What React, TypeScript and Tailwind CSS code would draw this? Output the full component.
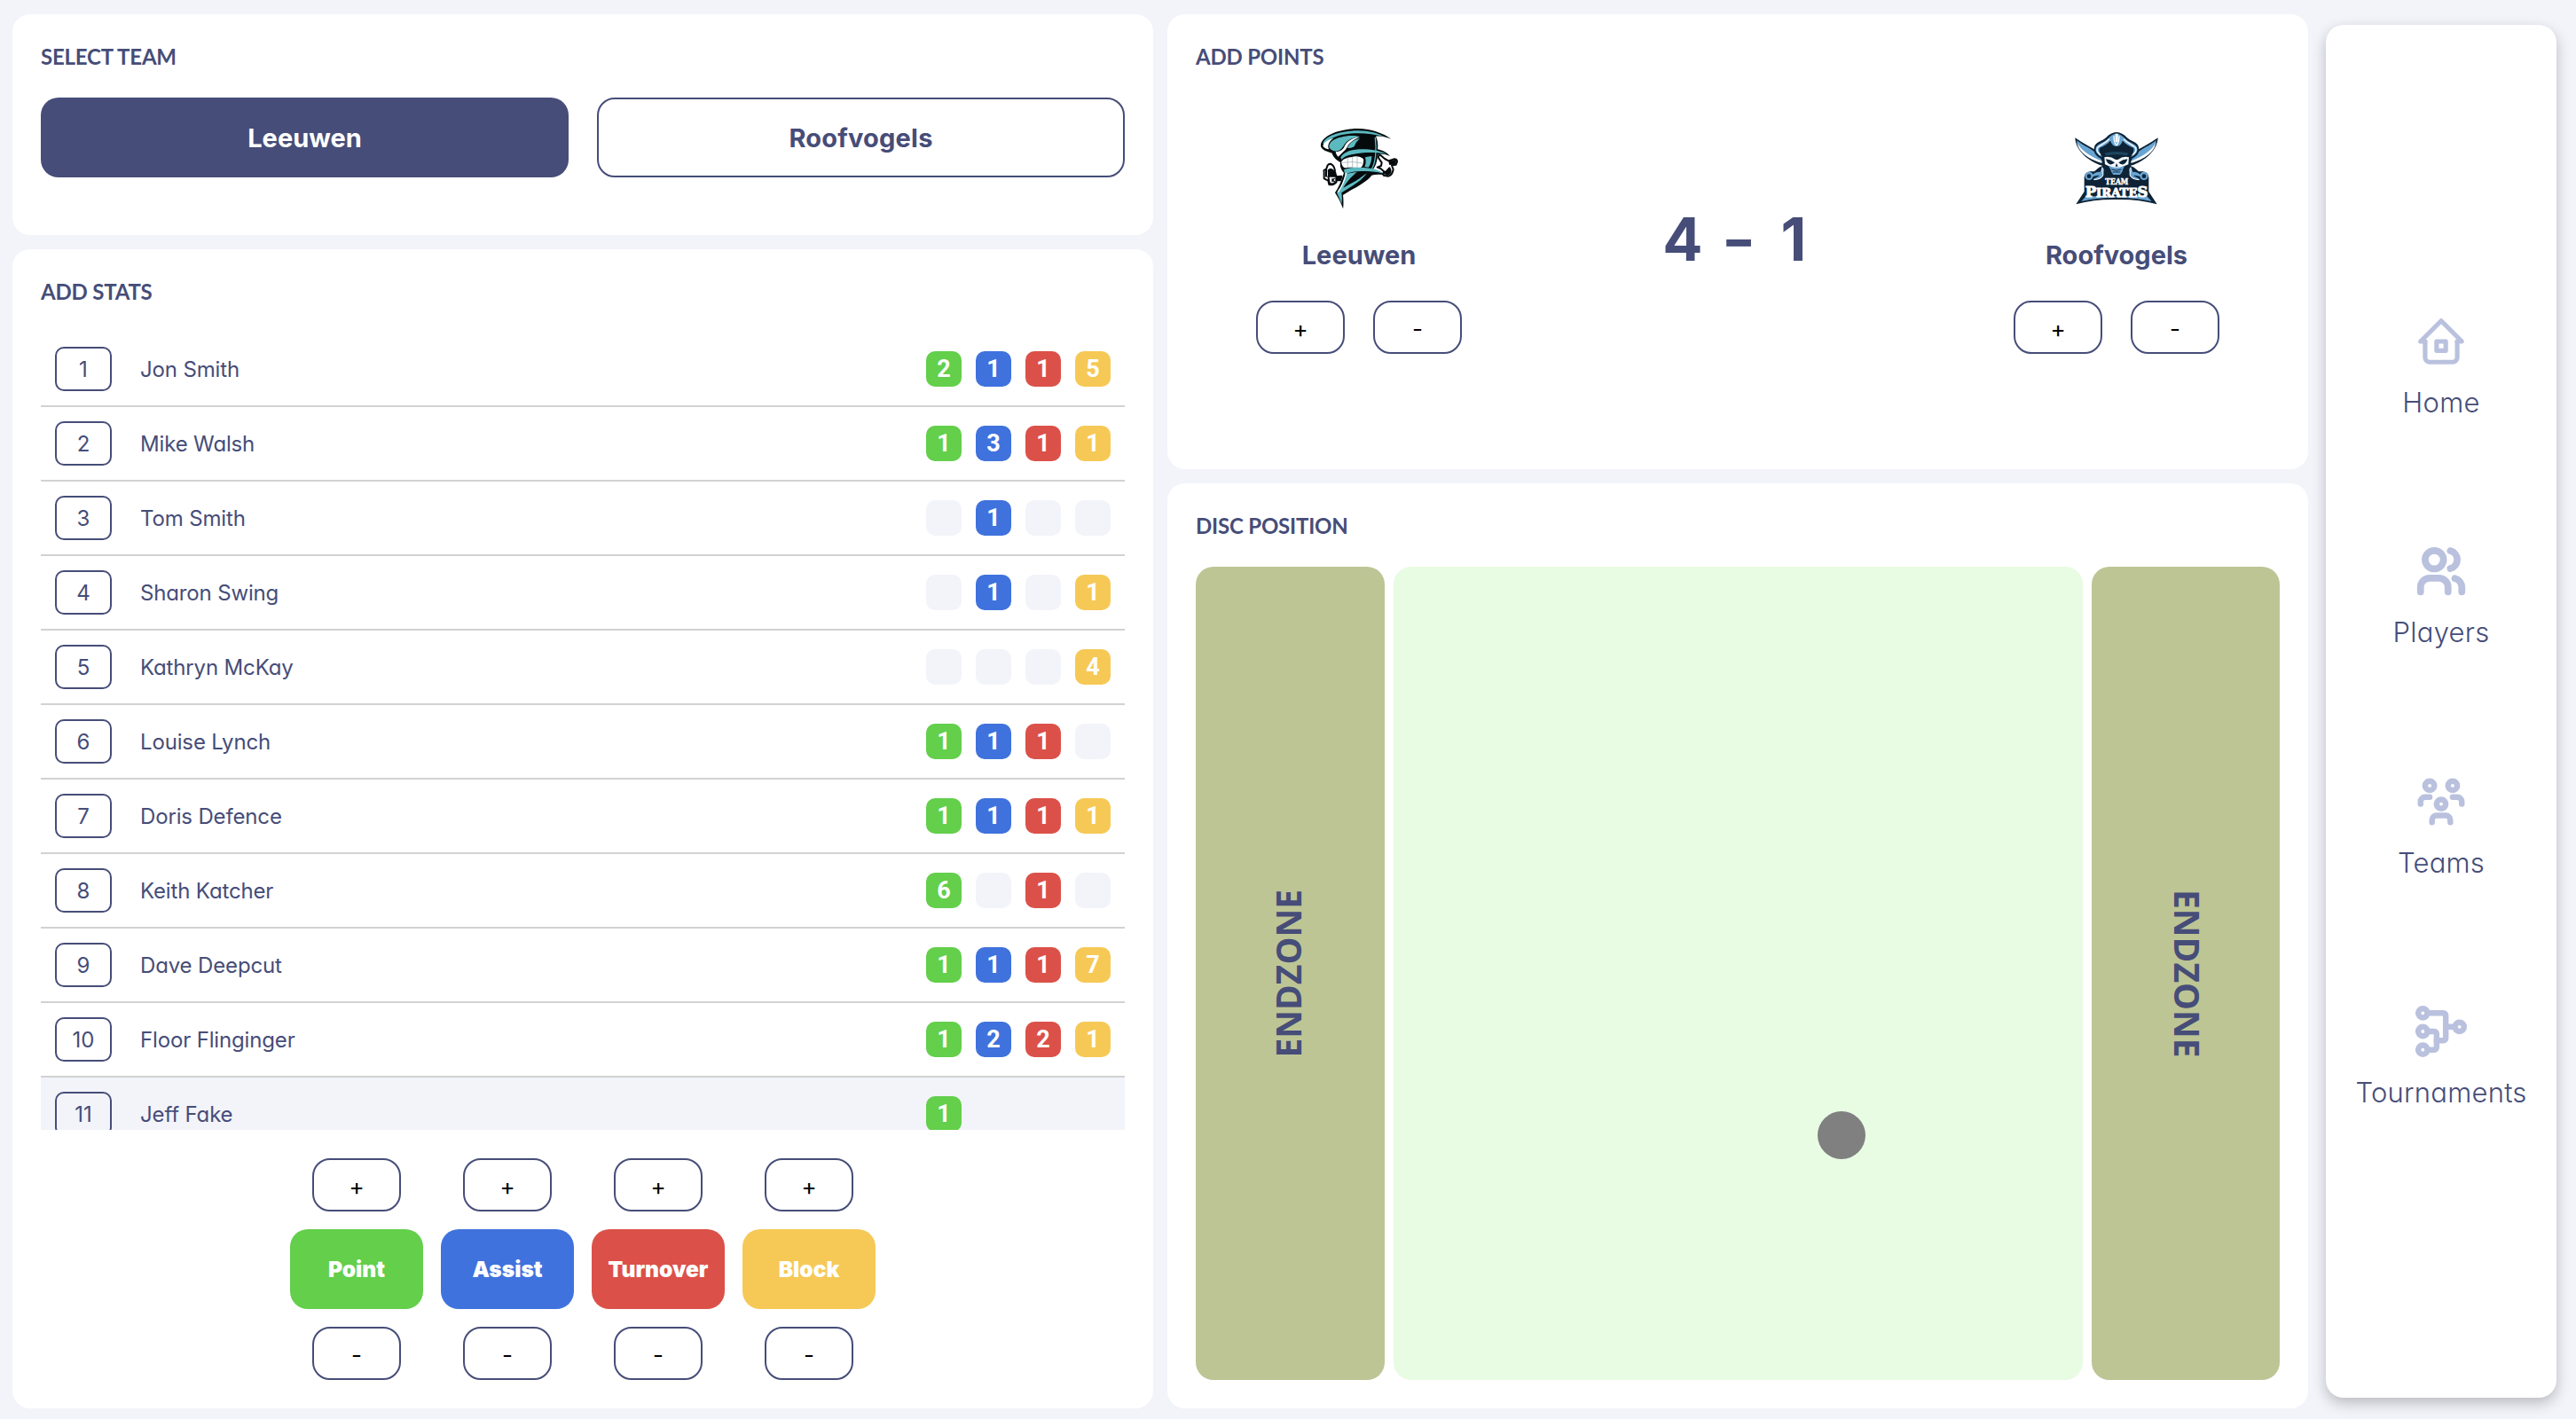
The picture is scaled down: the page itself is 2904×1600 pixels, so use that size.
import type { ReactNode } from "react";

type Stat = number | null;

const players: { name: string; stats: Stat[] }[] = [
  { name: "Jon Smith", stats: [2, 1, 1, 5] },
  { name: "Mike Walsh", stats: [1, 3, 1, 1] },
  { name: "Tom Smith", stats: [null, 1, null, null] },
  { name: "Sharon Swing", stats: [null, 1, null, 1] },
  { name: "Kathryn McKay", stats: [null, null, null, 4] },
  { name: "Louise Lynch", stats: [1, 1, 1, null] },
  { name: "Doris Defence", stats: [1, 1, 1, 1] },
  { name: "Keith Katcher", stats: [6, null, 1, null] },
  { name: "Dave Deepcut", stats: [1, 1, 1, 7] },
  { name: "Floor Flinginger", stats: [1, 2, 2, 1] },
  { name: "Jeff Fake", stats: [1, null, null, null] },
];

const statColors = ["bg-[#63cf4b]", "bg-[#3f72dd]", "bg-[#db5149]", "bg-[#f6c956]"];
const actions = ["Point", "Assist", "Turnover", "Block"];

function Card({ title, className = "", children }: { title: string; className?: string; children: ReactNode }) {
  return (
    <section className={`flex flex-col rounded-[20px] bg-white p-8 ${className}`}>
      <h2 className="h-[30px] shrink-0 pt-px font-['Lato',sans-serif] text-[24px] leading-[30px] font-bold tracking-[-0.2px] text-[#464d78]">
        {title}
      </h2>
      {children}
    </section>
  );
}

function StepButton({ children }: { children: ReactNode }) {
  return (
    <button className="h-[60px] w-[100px] rounded-[20px] border-2 border-[#464d78] bg-white pt-1 text-[26px] leading-none text-black">
      {children}
    </button>
  );
}

function PlayerRow({ index, name, stats }: { index: number; name: string; stats: Stat[] }) {
  const selected = index === 11;
  return (
    <li
      className={`flex h-[84px] shrink-0 items-center border-b-2 border-[#d2d2d2] px-4 ${selected ? "bg-[#f3f4fa]" : "bg-white"}`}
    >
      <span className="flex h-[50px] w-16 items-center justify-center rounded-[10px] border-2 border-[#464d78] pt-0.5 text-[24px] text-[#464d78]">
        {index}
      </span>
      <span className="ml-8 flex-1 pt-0.5 text-[24px] tracking-[-0.15px] text-[#464d78]">{name}</span>
      <div className="flex gap-4">
        {stats.map((value, i) => (
          <span
            key={i}
            className={`flex size-10 items-center justify-center rounded-[10px] pt-px font-['Roboto',sans-serif] text-[27px] font-bold text-white ${value === null ? "bg-[#f3f4fa]" : statColors[i]}`}
          >
            {value}
          </span>
        ))}
      </div>
    </li>
  );
}

function TornadoLogo() {
  return (
    <svg viewBox="0 0 100 100" className="size-[100px] overflow-visible">
      <g transform="translate(-23 -19) scale(0.33333)" strokeLinejoin="round" strokeLinecap="round">
        <path
          fill="#050b0d"
          d="M90 136C86 104 142 76 215 75C262 76 300 90 328 110C306 101 288 99 276 101C283 115 284 132 282 145C300 148 316 158 324 168C305 160 290 160 282 165C281 185 275 204 265 215C285 217 300 223 312 234C293 229 275 229 262 233C240 262 192 280 165 300C167 315 167 335 165 346C158 325 148 307 138 292C150 275 160 250 168 225C158 214 154 203 156 189C146 183 131 172 128 158C110 152 96 150 90 136Z"
        />
        <path fill="#5cb9c0" d="M97 126C104 98 160 82 215 82C255 82 285 92 305 102C265 92 225 88 185 92C145 96 115 108 106 132Z" />
        <path fill="#fff" d="M97 134C100 140 110 144 118 145C110 135 118 115 134 107C112 113 99 123 97 134Z" />
        <path fill="#5cb9c0" d="M119 140C114 122 135 108 158 104C178 99 205 97 222 103C200 106 180 113 172 126C166 134 160 148 146 151C138 152 126 150 119 140Z" />
        <path fill="#fff" d="M140 152C154 155 166 147 171 133C180 115 198 107 222 103C203 112 186 121 179 138C172 150 158 160 149 170C144 166 141 159 140 152Z" />
        <path fill="#5cb9c0" d="M157 172C166 157 184 148 208 146C240 143 285 146 312 161C280 154 240 155 210 160C186 164 170 168 160 180Z" />
        <path fill="#5cb9c0" d="M180 140C186 124 200 114 222 108C212 118 206 126 204 134C198 140 190 142 180 140Z" />
        <path fill="#fff" d="M160 186C168 176 182 172 196 171C208 166 226 170 234 178C236 190 232 202 224 208C200 205 182 206 170 208C162 203 159 194 160 186Z" />
        <path fill="none" stroke="#9aa5a8" strokeWidth="2" d="M181 174V205M197 171V204M213 170V205M164 190Q200 184 233 192" />
        <path fill="#5cb9c0" d="M168 214C190 205 225 205 255 209C275 211 292 219 303 228C275 218 240 218 214 220C196 221 180 225 172 230Z" />
        <path fill="#5cb9c0" d="M240 172L262 168C262 184 258 198 251 206L238 204C243 194 243 184 240 172Z" />
        <path fill="#5cb9c0" d="M173 228L212 222C196 236 176 256 166 276L188 262L222 241L246 226C225 256 190 272 160 292C162 304 162 318 160 330C155 315 149 302 144 292C158 274 168 252 173 228Z" />
        <path fill="#050b0d" d="M218 222L242 224C226 244 200 256 178 268C190 250 204 238 218 222Z" />
        <path fill="none" stroke="#fff" strokeWidth="4" d="M176 226C170 250 162 270 149 288" />
        <path fill="none" stroke="#5cb9c0" strokeWidth="4" d="M274 106C279 145 276 190 261 214" />
        <g stroke="#050b0d" strokeWidth="6">
          <path fill="#fff" d="M101 222Q98 214 108 213L113 199Q120 191 129 198Q137 205 138 221L142 236L160 240L141 246L142 256Q132 268 118 264L115 251L101 244Z" />
          <path fill="#050b0d" d="M116 216Q126 208 134 220L138 234H117ZM144 238L160 236L156 250L144 250Z" />
          <path fill="#fff" d="M115 236H142V256Q130 267 119 259Z" />
          <path fill="none" d="M108 213V236" />
          <path fill="#fff" d="M285 174Q283 163 293 166L306 177L319 184L337 178Q348 178 348 187L344 197L330 199L335 213Q332 232 319 236L302 233Q299 225 305 221L292 210L281 206L294 201L296 190Z" />
          <path fill="#050b0d" d="M322 186L342 183L341 193L324 195ZM304 225Q312 221 322 208Q332 222 317 231Z" />
        </g>
        <path fill="none" stroke="#050b0d" strokeWidth="4" d="M129 245V254M129 250L136 244M130 249L137 255" />
      </g>
    </svg>
  );
}

function PiratesLogo() {
  return (
    <svg viewBox="0 0 100 100" className="size-[100px] overflow-visible">
      <g transform="translate(-17 -9) scale(0.33333)" strokeLinejoin="round">
        {[false, true].map((flip) => (
          <g key={String(flip)} transform={flip ? "translate(402 0) scale(-1 1)" : undefined}>
            <path fill="#0e2336" d="M61 76C88 96 116 108 141 125L166 152L158 172C118 163 62 124 61 76Z" />
            <path fill="#69a5d3" d="M66 85C92 104 120 116 143 136L154 160C118 150 76 126 66 85Z" />
            <path fill="#fff" d="M67 91C80 121 120 143 152 155L155 163C116 152 73 130 67 91Z" />
            <path fill="#0e2336" d="M64 301L92 258V210Q94 192 112 190L126 190L142 176L160 168L201 190V285Q130 283 64 301Z" />
            <circle cx="108" cy="205" r="14" fill="#69a5d3" />
            <circle cx="108" cy="206" r="7" fill="#0e2336" />
            <path fill="#69a5d3" d="M120 200Q136 188 146 192L152 175L159 182Q158 206 146 214Q134 220 122 216L144 204Q134 202 120 208Z" />
            <path fill="none" stroke="#fff" strokeWidth="3" d="M124 218Q154 216 156 200Q151 190 153 176" />
            <path fill="#69a5d3" d="M82 291L98 274H198V279Q140 278 82 291Z" />
          </g>
        ))}
        <path
          fill="#0e2336"
          d="M201 57C214 57 226 64 236 75C250 89 270 88 276 107C282 128 266 143 249 147L251 165L232 196L218 216H184L170 196L151 165L153 147C136 143 120 128 126 107C132 88 152 89 166 75C176 64 188 57 201 57Z"
        />
        <path fill="#69a5d3" d="M153 141C137 135 128 123 131 110C138 94 156 96 172 79C180 70 190 62 201 62C212 62 222 70 230 79C246 96 264 94 271 110C274 123 265 135 249 141C258 128 262 118 258 110C244 104 232 98 222 86C216 100 210 105 201 105C192 105 186 100 180 86C170 98 158 104 144 110C140 118 144 128 153 141Z" />
        <path fill="none" stroke="#fff" strokeWidth="4" d="M147 134C136 125 133 117 136 110C146 98 162 98 177 80M255 134C266 125 269 117 266 110C256 98 240 98 225 80M192 70Q192 96 201 100Q210 96 210 70" />
        <path fill="#fff" d="M197 62H206V88Q201 96 197 88Z" />
        <path fill="#1d4560" d="M160 128Q201 118 242 128L236 136Q201 130 166 136Z" />
        <path fill="#f4f9fc" d="M160 142Q178 136 198 150H206Q224 136 243 142L241 166L222 174L212 186H192L180 174L162 166Z" />
        <path fill="#0e2336" d="M165 148Q182 150 195 160Q188 168 178 166Q168 162 165 148ZM238 148Q220 150 208 160Q214 168 225 166Q235 162 238 148ZM201 162L206 173H197Z" />
        <path fill="#69a5d3" d="M174 170L192 176H211L229 170Q222 182 220 192L213 201H190L184 192Q181 182 174 170Z" />
        <path fill="none" stroke="#0e2336" strokeWidth="3" d="M184 183Q201 190 218 183M188 192H214" />
        <g fill="#fff" stroke="#fff" fontFamily="'DejaVu Serif', serif" fontWeight="700">
          <text x="163" y="233" fontSize="25" textLength="78" lengthAdjust="spacingAndGlyphs" strokeWidth="1.5">
            TEAM
          </text>
          <text x="95" y="275" textLength="212" lengthAdjust="spacingAndGlyphs" fontSize="50" strokeWidth="3">
            P<tspan fontSize="40">IRATE</tspan>S
          </text>
        </g>
      </g>
    </svg>
  );
}

function TeamScore({ name, logo }: { name: string; logo: ReactNode }) {
  return (
    <div className="flex w-[368px] flex-col items-center">
      {logo}
      <div className="mt-[31px] h-9 text-[29px] leading-9 font-bold text-[#464d78]">{name}</div>
      <div className="mt-[33px] flex gap-8">
        <StepButton>+</StepButton>
        <StepButton>-</StepButton>
      </div>
    </div>
  );
}

const navItems = [
  { label: "Home", width: 2, paths: ["M5 12h-2l9 -9l9 9h-2", "M5 12v7a2 2 0 0 0 2 2h10a2 2 0 0 0 2 -2v-7", "M10 12h4v4h-4z"] },
  {
    label: "Players",
    width: 3,
    paths: [
      "M5 7a4 4 0 1 0 8 0a4 4 0 1 0 -8 0",
      "M3 21v-2a4 4 0 0 1 4 -4h4a4 4 0 0 1 4 4v2",
      "M16 3.13a4 4 0 0 1 0 7.75",
      "M21 21v-2a4 4 0 0 0 -3 -3.85",
    ],
  },
  {
    label: "Teams",
    width: 2.5,
    paths: [
      "M10 13a2 2 0 1 0 4 0a2 2 0 0 0 -4 0",
      "M8 21v-1a2 2 0 0 1 2 -2h4a2 2 0 0 1 2 2v1",
      "M15 5a2 2 0 1 0 4 0a2 2 0 0 0 -4 0",
      "M17 10h2a2 2 0 0 1 2 2v1",
      "M5 5a2 2 0 1 0 4 0a2 2 0 0 0 -4 0",
      "M3 13v-1a2 2 0 0 1 2 -2h2",
    ],
  },
  {
    label: "Tournaments",
    width: 2.5,
    paths: [
      "M2 4a2 2 0 1 0 4 0a2 2 0 1 0 -4 0",
      "M18 10a2 2 0 1 0 4 0a2 2 0 1 0 -4 0",
      "M2 12a2 2 0 1 0 4 0a2 2 0 1 0 -4 0",
      "M2 20a2 2 0 1 0 4 0a2 2 0 1 0 -4 0",
      "M6 12h3a1 1 0 0 1 1 1v6a1 1 0 0 1 -1 1h-3",
      "M6 4h7a1 1 0 0 1 1 1v10a1 1 0 0 1 -1 1h-3",
      "M14 10h4",
    ],
  },
];

export default function App() {
  return (
    <div className="flex h-[1600px] w-[2904px] gap-5 bg-[#f3f4fa] pt-4 pr-[22px] pl-3.5 font-['Inter',sans-serif] [font-feature-settings:'cv11']">
      <main className="flex h-[1572px] gap-4">
        <div className="flex w-[1286px] flex-col gap-4">
          <Card title="SELECT TEAM" className="h-[249px]">
            <div className="mt-8 grid h-[90px] grid-cols-2 gap-8">
              <button className="rounded-[20px] bg-[#464d78] pt-px text-[29px] font-bold text-white">Leeuwen</button>
              <button className="rounded-[20px] border-2 border-[#464d78] bg-white pt-px text-[29px] font-bold tracking-[0.2px] text-[#464d78]">
                Roofvogels
              </button>
            </div>
          </Card>
          <Card title="ADD STATS" className="h-[1307px]">
            <ul className="mt-8 flex h-[899px] flex-col overflow-hidden">
              {players.map((p, i) => (
                <PlayerRow key={p.name} index={i + 1} name={p.name} stats={p.stats} />
              ))}
            </ul>
            <div className="mt-8 flex justify-center gap-5">
              {actions.map((label, i) => (
                <div key={label} className="flex w-[150px] flex-col items-center gap-5">
                  <StepButton>+</StepButton>
                  <button
                    className={`h-[90px] w-full rounded-[20px] pt-px text-[24.5px] font-black text-white ${statColors[i]}`}
                  >
                    {label}
                  </button>
                  <StepButton>-</StepButton>
                </div>
              ))}
            </div>
          </Card>
        </div>

        <div className="flex w-[1286px] flex-col gap-4">
          <Card title="ADD POINTS" className="h-[513px]">
            <div className="mt-[61px] flex justify-between">
              <TeamScore name="Leeuwen" logo={<TornadoLogo />} />
              <div className="flex h-[262px] items-center text-[67px] font-bold text-[#464d78]">
                <span className="w-[62px] text-center">4</span>
                <span className="w-[64px] scale-x-125 text-center">-</span>
                <span className="w-[60px] text-center">1</span>
              </div>
              <TeamScore name="Roofvogels" logo={<PiratesLogo />} />
            </div>
          </Card>
          <Card title="DISC POSITION" className="h-[1043px]">
            <div className="mt-8 flex flex-1 gap-2.5">
              <div className="flex w-[213px] items-center justify-center rounded-[20px] bg-[#bdc595] pr-1.5">
                <span className="rotate-180 font-['Open_Sans',sans-serif] text-[39px] leading-none font-bold text-[#464d78] [writing-mode:vertical-rl]">
                  ENDZONE
                </span>
              </div>
              <div className="relative flex-1 rounded-[20px] bg-[#e8fbe3]">
                <div className="absolute top-[614px] left-[478px] size-[54px] rounded-full bg-[#808080]" />
              </div>
              <div className="flex w-[212px] items-center justify-center rounded-[20px] bg-[#bdc595] pl-1">
                <span className="font-['Open_Sans',sans-serif] text-[39px] leading-none font-bold text-[#464d78] [writing-mode:vertical-rl]">
                  ENDZONE
                </span>
              </div>
            </div>
          </Card>
        </div>
      </main>

      <nav className="mt-3 flex h-[1548px] w-[260px] flex-col items-center justify-center gap-[139.5px] rounded-[20px] bg-white pt-0.5 shadow-[0_6px_16px_rgba(0,0,0,0.24)]">
        {navItems.map((item) => (
          <a key={item.label} className="flex h-[120px] flex-col items-center">
            <svg
              viewBox="0 0 24 24"
              className="size-[62px]"
              fill="none"
              stroke="#b9c1de"
              strokeWidth={item.width}
              strokeLinecap="round"
              strokeLinejoin="round"
            >
              {item.paths.map((d) => (
                <path key={d} d={d} />
              ))}
            </svg>
            <span className="mt-[18px] text-[31px] leading-10 font-[350] tracking-[0.25px] text-[#464d78]">{item.label}</span>
          </a>
        ))}
      </nav>
    </div>
  );
}
